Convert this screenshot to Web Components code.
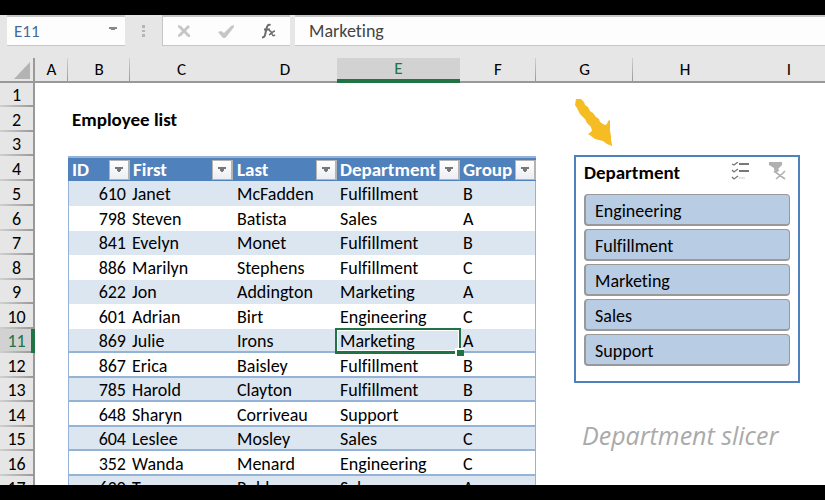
<!DOCTYPE html>
<html lang="en">
<head>
<meta charset="utf-8">
<title>Employee list</title>
<style>
  body { margin: 0; background: #000; font-family: Carlito, Lato, "Liberation Sans", sans-serif; font-size: 18px; font-variant-ligatures: none; color: #000; }
</style>
</head>
<body>
<work-book>
  <formula-bar slot="bar" cell="E11" value="Marketing"></formula-bar>
  <sheet-grid></sheet-grid>
  <slicer-panel slot="float" heading="Department">
    <slicer-item>Engineering</slicer-item>
    <slicer-item>Fulfillment</slicer-item>
    <slicer-item>Marketing</slicer-item>
    <slicer-item>Sales</slicer-item>
    <slicer-item>Support</slicer-item>
    <span slot="caption">Department slicer</span>
  </slicer-panel>
</work-book>
<script>
const mount = (el, html) => { el.attachShadow({ mode: "open" }).innerHTML = html; };

customElements.define("work-book", class extends HTMLElement {
  connectedCallback() {
    mount(this, `<style>
      :host { display: flex; flex-direction: column; height: 100vh; box-sizing: border-box; padding: 15px 0; background: #000; }
      main { position: relative; flex: 1; min-height: 0; overflow: hidden; background: #fff; }
      ::slotted([slot=float]) { position: absolute; left: 574px; top: 40px; }
    </style><slot name="bar"></slot><main><slot></slot><slot name="float"></slot></main>`);
  }
});

customElements.define("formula-bar", class extends HTMLElement {
  connectedCallback() {
    mount(this, `<style>
      :host { display: flex; height: 43px; align-items: flex-start; background: #e6e6e6; }
      .box { height: 31px; box-sizing: border-box; border-top: 2px solid #c6c6c6; border-bottom: 1px solid #c6c6c6; background: #fdfdfd; display: flex; align-items: center; }
      .name { width: 118px; margin-left: 7px; padding-left: 7px; }
      input { font: inherit; color: #444; border: 0; padding: 0; background: none; min-width: 0; flex: 1; outline: 0; height: 26px; font-variant-ligatures: none; }
      .name input { color: #456a9a; font-size: 17px; }
      button { border: 0; background: none; padding: 0; flex: 1; height: 28px; display: grid; place-items: center; }
      .name button { flex: 0 0 24px; padding-bottom: 4px; }
      .dots { width: 37px; height: 31px; display: grid; place-items: center; }
      .tools { width: 128px; border-left: 1px solid #c6c6c6; }
      .text { flex: 1; margin-left: 5px; padding-left: 14px; }
      svg { display: block; }
    </style>
    <div class="box name"><input aria-label="Name box" value="${this.getAttribute("cell")}"><button aria-label="Names"><svg width="8" height="4"><path d="M0 0h8v2H6v1H2V2H0z" fill="#888"/></svg></button></div>
    <div class="dots"><svg width="3" height="12"><path d="M0 0h3v3H0zM0 5h3v2H0zM0 9h3v3H0z" fill="#b5b5b5"/></svg></div>
    <div class="box tools">
      <button aria-label="Cancel"><svg width="14" height="12"><path d="M1 0l3 1 3 3 4-4 2 2-4 4 4 4v2h-2L7 8l-3 3-3 1v-2l4-4-4-4z" fill="#c6c6c6"/></svg></button>
      <button aria-label="Enter"><svg width="16" height="13"><path d="M0 7l3-1 3 2 7-7 3-1v2L9 11l-2 2H5z" fill="#c6c6c6"/></svg></button>
      <button aria-label="Insert function"><svg width="16" height="16" fill="none" stroke="#6b6b6b"><path d="M1 14.500c3 0 3-2 4-7s2-6.500 4.500-5.500M3 6.500h6" stroke-width="2"/><path d="M8 8c2-1 2 1 3 3s1 2 3 1M14 8c-2 0-3 2-6 4" stroke-width="1.500"/></svg></button>
    </div>
    <div class="box text"><input aria-label="Formula" value="${this.getAttribute("value")}"></div>`);
  }
});

customElements.define("filter-button", class extends HTMLElement {
  connectedCallback() {
    mount(this, `<style>
      :host { display: block; flex: none; margin-left: auto; }
      button { box-sizing: border-box; width: 21px; height: 20px; padding: 0; display: grid; place-items: center; border: 1px solid #b4b4b4; border-right-width: 2px; background: linear-gradient(#fff, #eceef3); }
    </style><button aria-label="Filter"><svg width="8" height="5"><path d="M0 0h8v2H6v2H5v1H3V4H2V2H0z" fill="#777"/></svg></button>`);
  }
});

customElements.define("sheet-grid", class extends HTMLElement {
  connectedCallback() {
    const people = [
      [610, "Janet", "McFadden", "Fulfillment", "B"],
      [798, "Steven", "Batista", "Sales", "A"],
      [841, "Evelyn", "Monet", "Fulfillment", "B"],
      [886, "Marilyn", "Stephens", "Fulfillment", "C"],
      [622, "Jon", "Addington", "Marketing", "A"],
      [601, "Adrian", "Birt", "Engineering", "C"],
      [869, "Julie", "Irons", "Marketing", "A"],
      [867, "Erica", "Baisley", "Fulfillment", "B"],
      [785, "Harold", "Clayton", "Fulfillment", "B"],
      [648, "Sharyn", "Corriveau", "Support", "B"],
      [604, "Leslee", "Mosley", "Sales", "C"],
      [352, "Wanda", "Menard", "Engineering", "C"],
      [620, "Tracy", "Robles", "Sales", "A"]
    ];
    const blank = n => "<td></td>".repeat(n);
    const row = (n, cells, cls = "") => `<tr class="${cls}"><th scope="row">${n}</th>${cells}</tr>`;
    const heads = ["ID", "First", "Last", "Department", "Group"]
      .map(h => `<td class="h"><div>${h}<filter-button></filter-button></div></td>`).join("");
    let body = row(1, blank(9)) + row(2, `<td></td><td class="title">Employee list</td>` + blank(7)) + row(3, blank(9)) + row(4, blank(1) + heads + blank(3), "head");
    people.forEach((p, i) => {
      const n = i + 5;
      const cells = p.map((v, c) => {
        const active = n === 11 && c === 3;
        return `<td class="d${active ? " active" : ""}">${v}${active ? "<i></i>" : ""}</td>`;
      }).join("");
      body += row(n, blank(1) + cells + blank(3), (i % 2 ? "" : "band ") + (n > 10 ? "line " : "") + (n === 11 ? "current" : ""));
    });
    const letters = [..."ABCDEFGHI"].map(l => `<th scope="col" class="${l}">${l}</th>`).join("");
    mount(this, `<style>
      :host { display: block; }
      table { table-layout: fixed; border-collapse: separate; border-spacing: 0; width: 100%; min-width: 841px; }
      td, th { padding: 0; white-space: nowrap; line-height: 20px; font-weight: 400; box-sizing: border-box; }
      thead th { height: 25px; background: #e6e6e6; border-bottom: 2px solid #999; font-size: 17px; }
      thead .A, thead .B, thead .F, thead .G { background: linear-gradient(#d0d0d0, #999) right / 1px 100% no-repeat #e6e6e6; }
      thead .E { background: #d2d2d2; color: #217346; border-bottom: 4px solid #217346; padding-top: 1px; }
      thead .corner { border-right: 2px solid #999; }
      .corner svg { display: block; margin: 1px 0 0 14px; }
      tbody tr { height: 24px; }
      tbody tr:nth-child(even), tbody tr:nth-child(5) { height: 25px; }
      tbody th { border-right: 2px solid #999; background: linear-gradient(90deg, #d0d0d0, #999) bottom / 100% 2px no-repeat #e6e6e6; }
      .current th { background-color: #d2d2d2; color: #217346; border-right: 4px solid #217346; padding-left: 2px; }
      .title { font-size: 19px; font-weight: 700; padding-left: 4px; overflow: visible; }
      .h { background: #4f81bd; color: #fff; font-size: 19px; font-weight: 700; padding-left: 4px; border-top: 2px solid #95b3d7; }
      .h div { display: flex; align-items: center; height: 22px; }
      .d { padding-left: 4px; }
      .h:nth-child(n+6), .d:nth-child(n+6), .h:nth-child(4) { padding-left: 3px; }
      .d:nth-child(4) { padding-left: 2px; }
      .band .d { background: #dce6f1; }
      .line .d { box-shadow: inset 0 -2px #95b3d7; }
      .d:nth-child(3) { border-left: 1px solid #95b3d7; text-align: right; padding: 0 4px 0 0; }
      .d:nth-child(7) { border-right: 1px solid #95b3d7; }
      .active { position: relative; }
      .active::before { content: ""; position: absolute; inset: -1px -1px -1px -2px; border: 2px solid #217346; border-bottom-width: 3px; box-shadow: inset 0 0 0 1px #fff; }
      .active i { position: absolute; right: -4px; bottom: -3px; width: 7px; height: 6px; background: #217346; border: solid #fff; border-width: 2px 0 0 2px; }
    </style>
    <table>
      <colgroup><col style="width:35px"><col style="width:33px"><col style="width:62px"><col style="width:103px"><col style="width:104px"><col style="width:123px"><col style="width:76px"><col style="width:97px"><col style="width:104px"><col></colgroup>
      <thead><tr><th class="corner"><svg width="16" height="17"><path d="M16 0v17H0z" fill="#b3b3b3"/></svg></th>${letters}</tr></thead>
      <tbody>${body}</tbody>
    </table>`);
  }
});

customElements.define("slicer-item", class extends HTMLElement {
  connectedCallback() {
    mount(this, `<style>
      :host { display: block; }
      button { font: inherit; color: inherit; text-align: left; width: 100%; height: 32px; padding: 2px 9px 0; background: #b8cce4; border: 1px solid #999; border-left-width: 2px; border-bottom-width: 2px; border-radius: 4px; display: block; }
    </style><button><slot></slot></button>`);
  }
});

customElements.define("slicer-panel", class extends HTMLElement {
  connectedCallback() {
    mount(this, `<style>
      :host { display: block; width: 226px; }
      svg { display: block; }
      section { margin-top: 8px; box-sizing: border-box; height: 228px; border: 2px solid #4f81bd; background: #fff; padding: 0 8px; }
      header { height: 37px; display: flex; align-items: flex-start; font-size: 19px; font-weight: 700; line-height: 32px; padding-right: 3px; }
      header span { flex: 1; }
      header button { border: 0; padding: 5px 0 0; background: none; margin-left: 20px; }
      .list { display: grid; gap: 3px; }
      ::slotted([slot=caption]) { display: block; margin: 36px 0 0 8px; font-family: "Open Sans", sans-serif; font-size: 25px; line-height: 32px; font-style: italic; color: #aaa; white-space: nowrap; }
    </style>
    <svg width="40" height="49" viewBox="0 0 40 49"><path d="M2 1h5l3 3 1 3 3 2 2 4 3 2 3 4 3 2 1 3 3 2 2 1 2-1 1-3 2-1v11l1 5v4l1 5v1l-5-2-4-3-8-2-4-3-3-2 4-3-1-4-4-4-2-4-5-5-3-6-2-3z" fill="#f5bd23"/></svg>
    <section><header><span>${this.getAttribute("heading")}</span>
      <button aria-label="Multi-select"><svg width="18" height="18" fill="none" stroke="#777"><path d="M8 2h10M8 9h10" stroke-width="2"/><path d="M8 16h6" stroke="#ccc" stroke-width="1"/><path d="M1 2l2 1 4-3M1 8l2 2 4-3M1 15l2 2 4-3" stroke-width="1.300"/></svg></button>
      <button aria-label="Clear filter"><svg width="18" height="18"><path d="M0 0h13v3L9 7v3L5 8V6L0 3z" fill="#b0b0b0"/><path d="M5 9l4 3 7 5M16 9l-3 3-6 5M10 8l-5 2" stroke="#b0b0b0" stroke-width="1.600" fill="none"/></svg></button></header>
      <div class="list"><slot></slot></div>
    </section>
    <slot name="caption"></slot>`);
  }
});
</script>
</body>
</html>
